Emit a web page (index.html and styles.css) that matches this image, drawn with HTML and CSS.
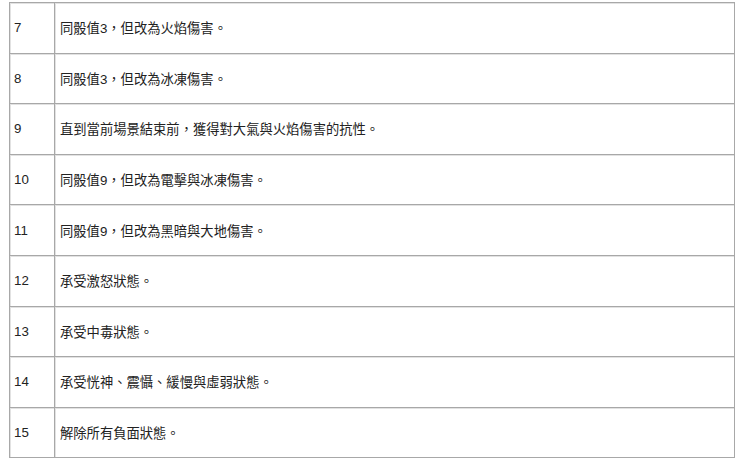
FILE: index.html
```html
<!DOCTYPE html>
<html lang="zh-Hant">
<head>
<meta charset="utf-8">
<link rel="stylesheet" href="styles.css">
</head>
<body>
<table class="tbl">
  <tbody>
    <tr><td class="num">7</td><td class="txt">同骰值3，但改為火焰傷害。</td></tr>
    <tr><td class="num">8</td><td class="txt">同骰值3，但改為冰凍傷害。</td></tr>
    <tr><td class="num">9</td><td class="txt">直到當前場景結束前，獲得對大氣與火焰傷害的抗性。</td></tr>
    <tr><td class="num">10</td><td class="txt">同骰值9，但改為電擊與冰凍傷害。</td></tr>
    <tr><td class="num">11</td><td class="txt">同骰值9，但改為黑暗與大地傷害。</td></tr>
    <tr><td class="num">12</td><td class="txt">承受激怒狀態。</td></tr>
    <tr><td class="num">13</td><td class="txt">承受中毒狀態。</td></tr>
    <tr><td class="num">14</td><td class="txt">承受恍神、震懾、緩慢與虛弱狀態。</td></tr>
    <tr><td class="num">15</td><td class="txt">解除所有負面狀態。</td></tr>
  </tbody>
</table>
</body>
</html>
```
FILE: styles.css
```css
html, body {
  margin: 0;
  padding: 0;
  background: #ffffff;
}
body {
  padding: 2px 0 0 9px;
  font-family: "Liberation Sans", Arial, "Noto Sans CJK TC", sans-serif;
  font-size: 13.3px;
  color: #222222;
}
.tbl {
  border-collapse: collapse;
  width: 726px;
  table-layout: fixed;
}
.tbl td {
  border: 1px solid #a8a8a8;
  box-shadow: inset 1px 1px 0 #e2e2e2;
  height: 50.6px;
  padding: 0 0 0 5px;
  vertical-align: middle;
  box-sizing: border-box;
}
.tbl td.num {
  width: 45px;
  padding-left: 4px;
}
```
